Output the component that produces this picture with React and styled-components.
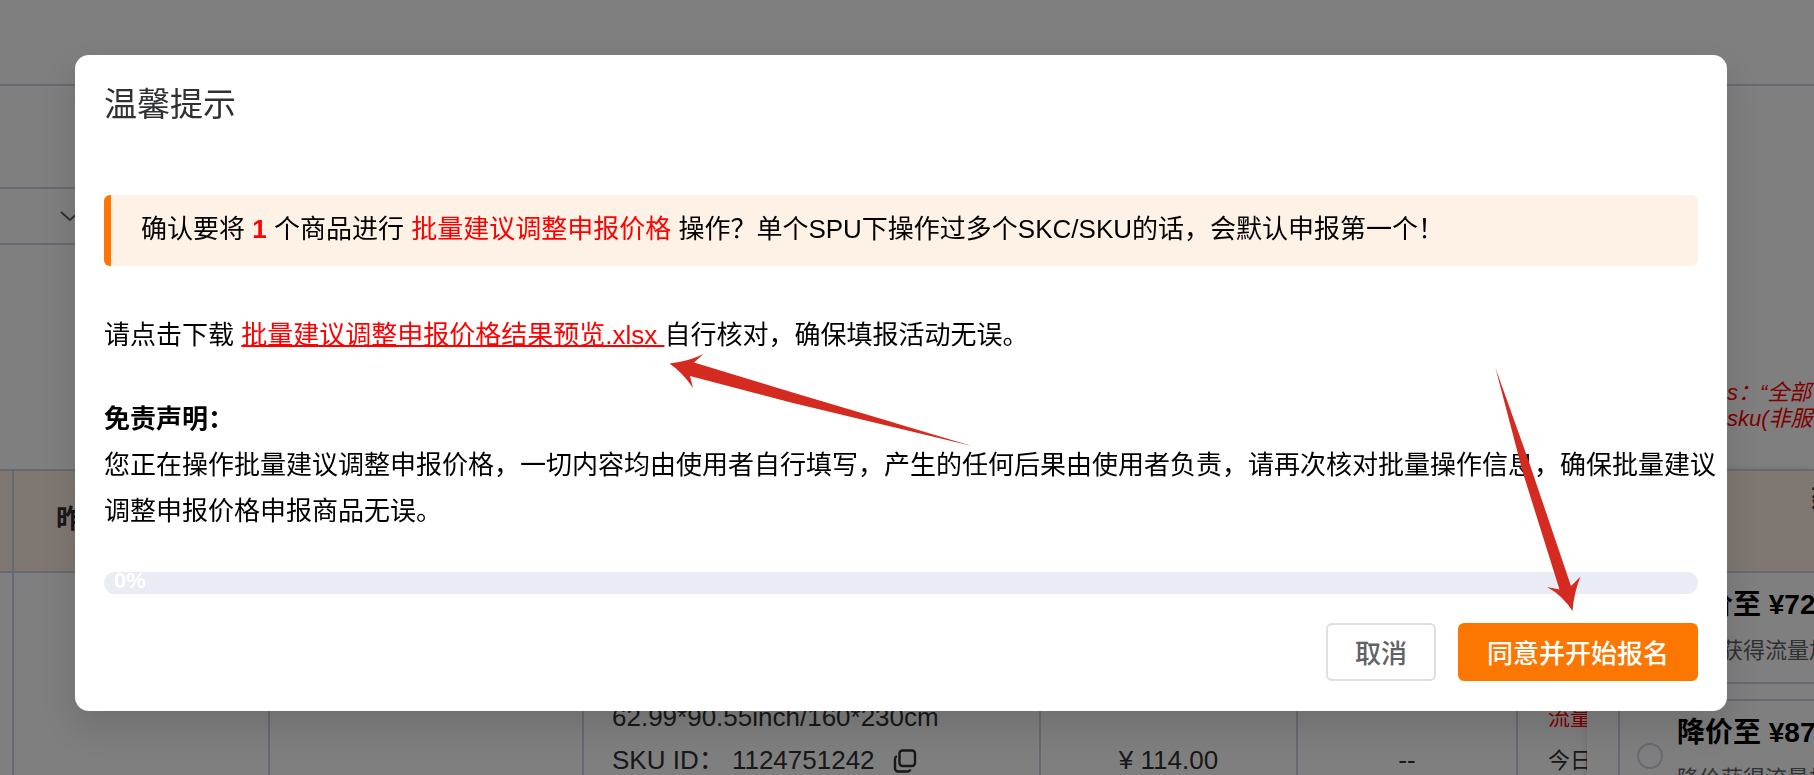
import React from 'react';
import styled, { createGlobalStyle } from 'styled-components';

const colours = {
  primary: '#fb7701',
  danger: '#ff0000',
  border: '#ccd3e2',
  text: '#303133',
  muted: '#606266'
};

const GlobalStyle = createGlobalStyle`
  * {
    box-sizing: border-box;
  }
  body {
    margin: 0;
    overflow: hidden;
    background: #fff;
    color: ${colours.text};
    font-family: 'Liberation Sans', 'Noto Sans CJK SC', sans-serif;
    font-size: 26px;
  }
`;

const Page = styled.div`
  display: flex;
  flex-direction: column;
  height: 100vh;
  overflow: hidden;
`;

const TopBar = styled.header`
  flex: none;
  height: 86px;
  border-bottom: 2px solid ${colours.border};
`;

const Filters = styled.div`
  flex: none;
  display: flex;
  padding-top: 101px;
`;

const SelectBox = styled.label`
  display: flex;
  align-items: center;
  justify-content: flex-end;
  width: 92px;
  height: 58px;
  padding-right: 10px;
  border: 2px solid ${colours.border};
  border-left: none;
`;

const Select = styled.select`
  flex: 1;
  min-width: 0;
  height: 100%;
  appearance: none;
  border: none;
  background: none;
`;

const Tips = styled.p`
  flex: none;
  align-self: flex-end;
  width: 87px;
  height: 89px;
  margin: 135px 0 0;
  overflow: hidden;
  white-space: nowrap;
  color: ${colours.danger};
  font-size: 22px;
  font-style: italic;
  line-height: 26px;
`;

const TableArea = styled.div`
  flex: 1;
  display: flex;
  min-height: 0;
`;

const TableWrapper = styled.div`
  flex: 1;
  min-width: 0;
`;

const Table = styled.table`
  width: 100%;
  height: 500px;
  table-layout: fixed;
  border-spacing: 0;
`;

const HeadCell = styled.th`
  height: 104px;
  padding: 0 0 10px ${({ $first }) => ($first ? 0 : '42px')};
  overflow: hidden;
  border: solid ${colours.border};
  border-width: 2px ${({ $last }) => ($last ? 0 : '2px')} 2px 0;
  background: #fff0e4;
  text-align: left;
`;

const Cell = styled.td`
  padding: ${({ $inset = 0 }) => `123px 0 0 ${$inset}px`};
  overflow: hidden;
  vertical-align: top;
  border-right: ${({ $last }) => ($last ? 0 : '2px')} solid ${colours.border};
  font-size: ${({ $small }) => ($small ? '22px' : '26px')};
  line-height: 43px;
  white-space: nowrap;
`;

const Line = styled.div`
  display: flex;
  align-items: center;
  min-height: 43px;
  justify-content: ${({ $center }) => ($center ? 'center' : 'flex-start')};
  color: ${({ $red }) => ($red ? colours.danger : 'inherit')};
`;

const CopyButton = styled.button`
  display: flex;
  margin-left: 18px;
  padding: 0;
  border: none;
  background: none;
  color: inherit;
`;

const FixedColumn = styled.aside`
  flex: none;
  display: flex;
  flex-direction: column;
  width: 227px;
  overflow: hidden;
  box-shadow: -2px 0 6px rgba(0, 0, 0, 0.12);
`;

const FixedHead = styled.div`
  flex: none;
  height: 104px;
  padding: 8px 0 0 224px;
  overflow: hidden;
  border: solid ${colours.border};
  border-width: 2px 0;
  background: #fff0e4;
  font-size: 24px;
  font-weight: 700;
  white-space: nowrap;
`;

const Options = styled.div`
  display: flex;
  flex-direction: column;
  gap: 15px;
  padding-left: 31px;
`;

const Option = styled.label`
  flex: none;
  display: flex;
  align-items: center;
  gap: 14px;
  height: ${({ $flush }) => ($flush ? '111px' : '114px')};
  padding-left: 17px;
  border: 2px solid ${colours.border};
  border-right: none;
  border-top-width: ${({ $flush }) => ($flush ? 0 : '2px')};
  white-space: nowrap;
`;

const Radio = styled.input`
  flex: none;
  appearance: none;
  width: 26px;
  height: 26px;
  margin: 0;
  border: 2px solid ${colours.border};
  border-radius: 50%;
`;

const OptionText = styled.span`
  display: flex;
  flex-direction: column;
  color: ${colours.muted};
  font-size: 22px;
  line-height: 46px;
`;

const OptionPrice = styled.strong`
  color: #000;
  font-size: 28px;
`;

const Overlay = styled.div`
  position: fixed;
  inset: 0;
  display: flex;
  align-items: flex-start;
  padding: 55px 87px 0 75px;
  background: rgba(0, 0, 0, 0.5);
`;

const Dialog = styled.section`
  flex: 1;
  min-width: 0;
  padding: 27px 29px 30px;
  border-radius: 14px;
  background: #fff;
  box-shadow: 0 16px 36px 4px rgba(0, 0, 0, 0.12);
  color: #000;
  line-height: 46px;
`;

const Title = styled.h1`
  margin: 0 0 67px;
  color: ${colours.text};
  font-size: 33px;
  font-weight: 400;
  line-height: 46px;
`;

const Alert = styled.p`
  margin: 0 0 46px;
  padding: 11px 30px 14px;
  border-left: 7px solid ${colours.primary};
  border-radius: 6px;
  background: #fef1e5;
`;

const Highlight = styled.span`
  color: ${colours.danger};
  font-weight: ${({ $bold }) => ($bold ? 700 : 400)};
`;

const Paragraph = styled.p`
  margin: 0 0 38px;
  white-space: nowrap;
`;

const DownloadLink = styled.a`
  color: ${colours.danger};
  text-decoration: underline;
  text-decoration-thickness: 2px;
`;

const Progress = styled.div`
  height: 22px;
  padding-left: 10px;
  overflow: hidden;
  border-radius: 11px;
  background: #e9ecf5;
  color: #fff;
  font-size: 22px;
  font-weight: 700;
  line-height: 18px;
`;

const Footer = styled.footer`
  display: flex;
  justify-content: flex-end;
  gap: 22px;
  margin-top: 29px;
`;

const Button = styled.button`
  height: 58px;
  padding: 0 27px 2px;
  border: 2px solid ${({ $primary }) => ($primary ? colours.primary : '#dcdfe6')};
  border-radius: 6px;
  background: ${({ $primary }) => ($primary ? colours.primary : '#fff')};
  color: ${({ $primary }) => ($primary ? '#fff' : colours.muted)};
  font-family: inherit;
  font-size: 26px;
  font-weight: 500;
`;

const Arrows = styled.svg`
  position: fixed;
  inset: 0;
  pointer-events: none;
`;

const CopyIcon = () => (
  <svg width="24" height="24" viewBox="0 0 24 24" fill="none" stroke="currentColor" strokeWidth="2.4">
    <rect x="6.5" y="1.5" width="15.5" height="15.5" rx="3" />
    <path d="M3.8 7Q2 8 2 10V19.5a3 3 0 0 0 3 3H14.5Q16.5 22.5 17.5 20.5" />
  </svg>
);

const ChevronIcon = () => (
  <svg width="20" height="12" viewBox="0 0 20 12" fill="none" stroke="#606266" strokeWidth="2">
    <path d="M1 2l9 8 9-8" />
  </svg>
);

const options = [
  { price: '¥72', flush: true },
  { price: '¥87', flush: false }
];

const App = () => (
  <>
    <GlobalStyle />
    <Page>
      <TopBar />
      <Filters>
        <SelectBox>
          <Select aria-label="筛选" />
          <ChevronIcon />
        </SelectBox>
      </Filters>
      <Tips>
        s：“全部
        <br />
        sku(非服饰
      </Tips>
      <TableArea>
        <TableWrapper>
          <Table>
            <colgroup>
              <col width="14" />
              <col width="256" />
              <col width="314" />
              <col width="457" />
              <col width="257" />
              <col width="220" />
              <col />
            </colgroup>
            <thead>
              <tr>
                <HeadCell $first />
                <HeadCell>昨</HeadCell>
                <HeadCell />
                <HeadCell />
                <HeadCell />
                <HeadCell />
                <HeadCell $last />
              </tr>
            </thead>
            <tbody>
              <tr>
                <Cell />
                <Cell />
                <Cell />
                <Cell $inset={28}>
                  <Line>62.99*90.55inch/160*230cm</Line>
                  <Line>
                    SKU ID： 1124751242
                    <CopyButton type="button" aria-label="复制">
                      <CopyIcon />
                    </CopyButton>
                  </Line>
                </Cell>
                <Cell>
                  <Line />
                  <Line $center>¥ 114.00</Line>
                </Cell>
                <Cell>
                  <Line />
                  <Line $center>--</Line>
                </Cell>
                <Cell $last $small $inset={30}>
                  <Line $red>流量</Line>
                  <Line>今日</Line>
                </Cell>
              </tr>
            </tbody>
          </Table>
        </TableWrapper>
        <FixedColumn>
          <FixedHead>建</FixedHead>
          <Options>
            {options.map((option) => (
              <Option key={option.price} $flush={option.flush}>
                <Radio type="radio" name="price" />
                <OptionText>
                  <OptionPrice>降价至 {option.price}</OptionPrice>
                  降价获得流量加
                </OptionText>
              </Option>
            ))}
          </Options>
        </FixedColumn>
      </TableArea>
    </Page>

    <Overlay>
      <Dialog role="dialog" aria-modal="true" aria-labelledby="dialog-title">
        <Title id="dialog-title">温馨提示</Title>
        <Alert>
          确认要将 <Highlight $bold>1</Highlight> 个商品进行 <Highlight>批量建议调整申报价格</Highlight>{' '}
          操作？单个SPU下操作过多个SKC/SKU的话，会默认申报第一个！
        </Alert>
        <Paragraph>
          请点击下载 <DownloadLink href="#preview">批量建议调整申报价格结果预览.xlsx </DownloadLink>
          自行核对，确保填报活动无误。
        </Paragraph>
        <Paragraph>
          <strong>免责声明：</strong>
          <br />
          您正在操作批量建议调整申报价格，一切内容均由使用者自行填写，产生的任何后果由使用者负责，请再次核对批量操作信息，确保批量建议
          <br />
          调整申报价格申报商品无误。
        </Paragraph>
        <Progress role="progressbar" aria-valuenow={0} aria-label="报名进度">
          0%
        </Progress>
        <Footer>
          <Button type="button">取消</Button>
          <Button type="button" $primary>
            同意并开始报名
          </Button>
        </Footer>
      </Dialog>
    </Overlay>

    <Arrows width="1814" height="775" viewBox="0 0 1814 775" fill="#d42a20" aria-hidden="true">
      <path d="M669.5 363.5Q690 361 703.5 354L694 362.5L791 392L972 446L791 402.5L690 376L693 388Q683 373 669.5 363.5Z" />
      <path d="M1572.5 611Q1562 595 1547 587L1559.5 589.5L1523 473L1495.5 368L1529 462L1571 586L1580.5 576.5Q1574 592 1572.5 611Z" />
    </Arrows>
  </>
);

export default App;
